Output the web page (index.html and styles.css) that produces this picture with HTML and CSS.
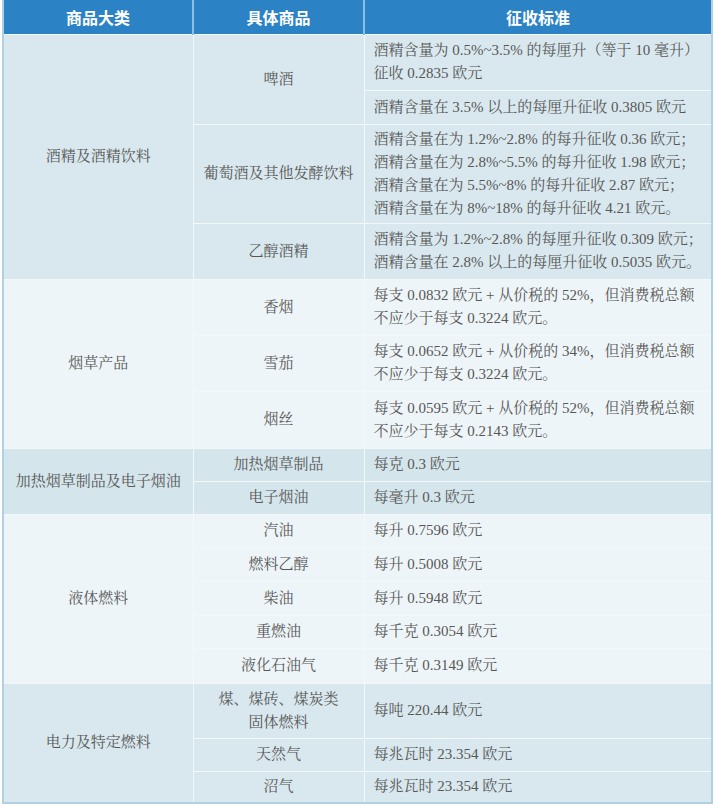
FILE: index.html
```html
<!DOCTYPE html>
<html lang="zh-CN">
<head>
<meta charset="utf-8">
<title>消费税征收标准</title>
<link rel="stylesheet" href="styles.css">
</head>
<body>
<table class="tax">
  <colgroup>
    <col class="c1"><col class="c2"><col class="c3">
  </colgroup>
  <thead>
    <tr class="h-head">
      <th>商品大类</th><th>具体商品</th><th>征收标准</th>
    </tr>
  </thead>
  <tbody class="g-dark">
    <tr class="h56">
      <td class="cat" rowspan="4">酒精及酒精饮料</td>
      <td class="item" rowspan="2">啤酒</td>
      <td class="std">酒精含量为 0.5%~3.5% 的每厘升（等于 10 毫升）<br>征收 0.2835 欧元</td>
    </tr>
    <tr class="h34">
      <td class="std">酒精含量在 3.5% 以上的每厘升征收 0.3805 欧元</td>
    </tr>
    <tr class="h99">
      <td class="item">葡萄酒及其他发酵饮料</td>
      <td class="std">酒精含量在为 1.2%~2.8% 的每升征收 0.36 欧元；<br>酒精含量在为 2.8%~5.5% 的每升征收 1.98 欧元；<br>酒精含量在为 5.5%~8% 的每升征收 2.87 欧元；<br>酒精含量在为 8%~18% 的每升征收 4.21 欧元。</td>
    </tr>
    <tr class="h56">
      <td class="item">乙醇酒精</td>
      <td class="std">酒精含量为 1.2%~2.8% 的每厘升征收 0.309 欧元；<br>酒精含量在 2.8% 以上的每厘升征收 0.5035 欧元。</td>
    </tr>
  </tbody>
  <tbody class="g-light">
    <tr class="h56">
      <td class="cat" rowspan="3">烟草产品</td>
      <td class="item">香烟</td>
      <td class="std">每支 0.0832 欧元 + 从价税的 52%，但消费税总额<br>不应少于每支 0.3224 欧元。</td>
    </tr>
    <tr class="h56">
      <td class="item">雪茄</td>
      <td class="std">每支 0.0652 欧元 + 从价税的 34%，但消费税总额<br>不应少于每支 0.3224 欧元。</td>
    </tr>
    <tr class="h57">
      <td class="item">烟丝</td>
      <td class="std">每支 0.0595 欧元 + 从价税的 52%，但消费税总额<br>不应少于每支 0.2143 欧元。</td>
    </tr>
  </tbody>
  <tbody class="g-mid">
    <tr class="h33">
      <td class="cat" rowspan="2">加热烟草制品及电子烟油</td>
      <td class="item">加热烟草制品</td>
      <td class="std">每克 0.3 欧元</td>
    </tr>
    <tr class="h33">
      <td class="item">电子烟油</td>
      <td class="std">每毫升 0.3 欧元</td>
    </tr>
  </tbody>
  <tbody class="g-light">
    <tr class="h33">
      <td class="cat" rowspan="5">液体燃料</td>
      <td class="item">汽油</td>
      <td class="std">每升 0.7596 欧元</td>
    </tr>
    <tr class="h34">
      <td class="item">燃料乙醇</td>
      <td class="std">每升 0.5008 欧元</td>
    </tr>
    <tr class="h34">
      <td class="item">柴油</td>
      <td class="std">每升 0.5948 欧元</td>
    </tr>
    <tr class="h33">
      <td class="item">重燃油</td>
      <td class="std">每千克 0.3054 欧元</td>
    </tr>
    <tr class="h35">
      <td class="item">液化石油气</td>
      <td class="std">每千克 0.3149 欧元</td>
    </tr>
  </tbody>
  <tbody class="g-dark">
    <tr class="h55">
      <td class="cat" rowspan="3">电力及特定燃料</td>
      <td class="item">煤、煤砖、煤炭类<br>固体燃料</td>
      <td class="std">每吨 220.44 欧元</td>
    </tr>
    <tr class="h33">
      <td class="item">天然气</td>
      <td class="std">每兆瓦时 23.354 欧元</td>
    </tr>
    <tr class="h32">
      <td class="item">沼气</td>
      <td class="std">每兆瓦时 23.354 欧元</td>
    </tr>
  </tbody>
</table>
</body>
</html>
```
FILE: styles.css
```css
html, body {
  margin: 0;
  padding: 0;
  background: #ffffff;
}

.tax {
  margin: 0 0 0 2px;
  width: 711px;
  border-collapse: collapse;
  table-layout: fixed;
  border-left: 2px solid #b0d0e4;
  border-right: 2px solid #b0d0e4;
  border-bottom: 2px solid #b0d0e4;
  font-family: "Liberation Serif", "Noto Serif CJK SC", "Noto Sans CJK SC", serif;
  font-size: 15px;
  color: #575757;
}

.c1 { width: 190px; }
.c2 { width: 171px; }
.c3 { width: 348px; }

.h-head th {
  height: 34px;
  padding: 0;
  background: #2b82c5;
  color: #ffffff;
  font-family: "Noto Sans CJK SC", sans-serif;
  font-weight: 700;
  font-size: 16px;
  text-align: center;
  vertical-align: middle;
  border-left: 2px solid #8cbde2;
  box-sizing: border-box;
}
.h-head th:first-child { border-left: none; }

td {
  padding: 0;
  vertical-align: middle;
  line-height: 23px;
  border: 1px solid #f3f8fa;
  box-sizing: border-box;
}

.cat, .item { text-align: center; }
.std { text-align: left; padding-left: 9px; }

.g-dark td { background: #d9e8ee; }
.g-light td { background: #eef5f8; }
.g-mid td { background: #d4e5eb; }

.h32 td { height: 32px; }
.h33 td { height: 33px; }
.h34 td { height: 34px; }
.h35 td { height: 35px; }
.h55 td { height: 55px; }
.h56 td { height: 56px; }
.h57 td { height: 57px; }
.h99 td { height: 99px; }

.cat, td.cat { height: auto; }
```
